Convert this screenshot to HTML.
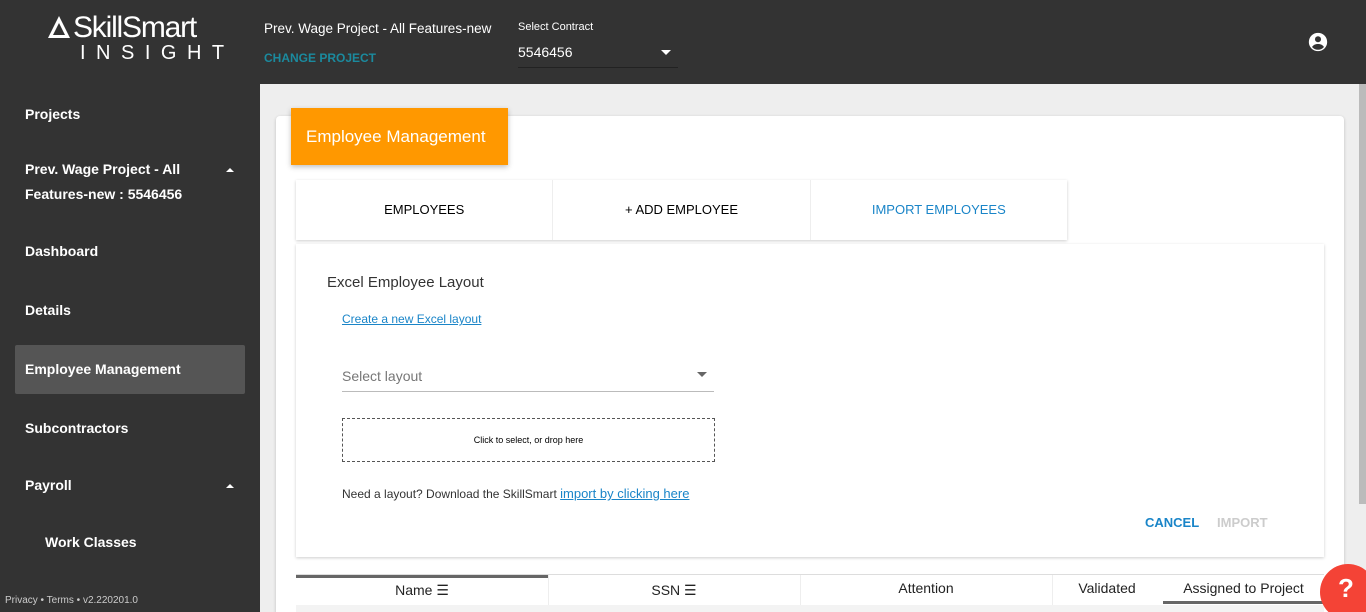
<!DOCTYPE html>
<html><head><style>
*{box-sizing:border-box;margin:0;padding:0}
html,body{width:1366px;height:612px;overflow:hidden}
body{font-family:"Liberation Sans",sans-serif;background:#eeeeee;position:relative}
.top{position:absolute;left:0;top:0;width:1366px;height:84px;background:#333;color:#fff}
.side{position:absolute;left:0;top:84px;width:260px;height:528px;background:#333;color:#fff;font-size:14px;font-weight:bold}
.side div{position:absolute;left:25px}
.card{position:absolute;left:276px;top:116px;width:1068px;height:500px;background:#fff;border-radius:4px;box-shadow:0 1px 3px rgba(0,0,0,.2)}
.abs{position:absolute}
</style></head><body>
<div class="top">
 <svg class="abs" style="left:46px;top:14px" width="26" height="26" viewBox="0 0 26 26"><path d="M13 2 L24 24 L2 24 Z M13 9 L7 21 L19 21 Z" fill="#fff" fill-rule="evenodd"/></svg>
 <div class="abs" style="left:73px;top:11px;font-size:30px;letter-spacing:-1.2px">SkillSmart</div>
 <div class="abs" style="left:80px;top:42px;font-size:20px;letter-spacing:10.5px;font-weight:300">INSIGHT</div>
 <div class="abs" style="left:264px;top:21px;font-size:13.5px">Prev. Wage Project - All Features-new</div>
 <div class="abs" style="left:264px;top:51px;font-size:12px;color:#1b8a9e;font-weight:bold">CHANGE PROJECT</div>
 <div class="abs" style="left:518px;top:21px;font-size:11px">Select Contract</div>
 <div class="abs" style="left:518px;top:44px;font-size:14px">5546456</div>
 <div class="abs" style="left:661px;top:50px;border:5px solid transparent;border-top-color:#fff;border-bottom:0"></div>
 <div class="abs" style="left:518px;top:67px;width:160px;height:1px;background:#222"></div>
 <svg class="abs" style="left:1307px;top:31px" width="22" height="22" viewBox="0 0 24 24"><circle cx="12" cy="12" r="10" fill="#fff"/><circle cx="12" cy="9" r="3.3" fill="#333"/><path d="M5.5 17.5c1.5-2.5 4-3.3 6.5-3.3s5 .8 6.5 3.3c-1.8 2-4 3-6.5 3s-4.7-1-6.5-3z" fill="#333"/></svg>
</div>
<div class="side">
 <div style="top:22px">Projects</div>
 <div style="top:73px;line-height:25px;width:200px">Prev. Wage Project - All Features-new : 5546456</div>
 <div style="left:226px;top:84px;border:4px solid transparent;border-bottom-color:#fff;border-top:0"></div>
 <div style="top:159px">Dashboard</div>
 <div style="top:218px">Details</div>
 <div style="left:15px;top:261px;width:230px;height:49px;background:#555;border-radius:2px"></div>
 <div style="top:277px">Employee Management</div>
 <div style="top:336px">Subcontractors</div>
 <div style="top:393px">Payroll</div>
 <div style="left:226px;top:400px;border:4px solid transparent;border-bottom-color:#fff;border-top:0"></div>
 <div style="left:45px;top:450px">Work Classes</div>
 <div style="left:5px;top:511px;font-size:10px;font-weight:normal;color:#ccc">Privacy • Terms • v2.220201.0</div>
</div>
<div class="abs" style="left:1359px;top:84px;width:7px;height:420px;background:#bbb"></div>
<div class="card">
 <div class="abs" style="left:15px;top:-8px;width:217px;height:57px;background:#ff9800;color:#fff;font-size:17px;padding:19px 15px;box-shadow:0 2px 5px rgba(0,0,0,.25)">Employee Management</div>
 <div class="abs" style="left:20px;top:64px;width:771px;height:60px;background:#fff;box-shadow:0 1px 3px rgba(0,0,0,.2);display:flex;font-size:13px">
  <div style="flex:1;text-align:center;line-height:60px;border-right:1px solid #eee">EMPLOYEES</div>
  <div style="flex:1;text-align:center;line-height:60px;border-right:1px solid #eee">+ ADD EMPLOYEE</div>
  <div style="flex:1;text-align:center;line-height:60px;color:#1a85c8">IMPORT EMPLOYEES</div>
 </div>
 <div class="abs" style="left:20px;top:128px;width:1028px;height:313px;background:#fff;box-shadow:0 1px 3px rgba(0,0,0,.2)">
  <div class="abs" style="left:31px;top:30px;font-size:15px;color:#333">Excel Employee Layout</div>
  <div class="abs" style="left:46px;top:68px;font-size:12px;color:#1a85c8;text-decoration:underline">Create a new Excel layout</div>
  <div class="abs" style="left:46px;top:124px;font-size:14px;color:#777">Select layout</div>
  <div class="abs" style="left:401px;top:128px;border:5px solid transparent;border-top-color:#666;border-bottom:0"></div>
  <div class="abs" style="left:46px;top:147px;width:372px;height:1px;background:#bbb"></div>
  <div class="abs" style="left:46px;top:174px;width:373px;height:44px;border:1px dashed #555;font-size:9px;text-align:center;line-height:42px">Click to select, or drop here</div>
  <div class="abs" style="left:46px;top:242px;font-size:12px;color:#333">Need a layout? Download the SkillSmart <span style="color:#1a85c8;text-decoration:underline;font-size:13px">import by clicking here</span></div>
  <div class="abs" style="left:849px;top:271px;font-size:13px;font-weight:bold;color:#1a85c8">CANCEL</div>
  <div class="abs" style="left:921px;top:271px;font-size:13px;font-weight:bold;color:#ccc">IMPORT</div>
 </div>
 <div class="abs" style="left:20px;top:458px;width:1028px;height:42px;background:#fff;border-top:1px solid #ddd;font-size:14px;color:#222">
  <div class="abs" style="left:0;top:0;width:252px;height:3px;background:#666"></div>
  <div class="abs" style="left:0;top:7px;width:252px;text-align:center">Name ☰</div>
  <div class="abs" style="left:252px;top:0;width:1px;height:30px;background:#eee"></div>
  <div class="abs" style="left:252px;top:7px;width:252px;text-align:center">SSN ☰</div>
  <div class="abs" style="left:504px;top:0;width:1px;height:30px;background:#eee"></div>
  <div class="abs" style="left:504px;top:5px;width:252px;text-align:center">Attention</div>
  <div class="abs" style="left:756px;top:0;width:1px;height:30px;background:#eee"></div>
  <div class="abs" style="left:756px;top:5px;width:110px;text-align:center">Validated</div>
  <div class="abs" style="left:867px;top:5px;width:161px;text-align:center">Assigned to Project</div>
  <div class="abs" style="left:867px;top:26px;width:161px;height:3px;background:#666"></div>
  <div class="abs" style="left:0;top:30px;width:1028px;height:12px;background:#f3f3f3"></div>
 </div>
</div>
<div class="abs" style="left:1320px;top:564px;width:56px;height:56px;border-radius:50%;background:#f44336;color:#fff;font-size:26px;font-weight:bold;padding:9px 0 0 18px">?</div>
</body></html>
